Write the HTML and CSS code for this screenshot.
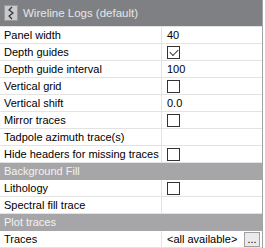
FILE: index.html
```html
<!DOCTYPE html>
<html lang="en">
<head>
  <meta charset="UTF-8" />
  <title>Wireline Logs</title>
  <link rel="stylesheet" href="styles.css">
</head>
<body>
  <div class="panel">
    <div class="title">
      <span class="icon">
        <svg width="14" height="16" viewBox="0 0 14 16">
          <rect x="0.5" y="0.5" width="13" height="15" fill="#c9c9cb" stroke="#9a9a9d"/>
          <path d="M8 2 L5 5 L9 8 L5 11 L8 14" fill="none" stroke="#333" stroke-width="1.2"/>
        </svg>
      </span>
      Wireline Logs (default)
    </div>
    <div class="grid">
      <div class="name">Panel width</div><div class="val">40</div>
      <div class="name">Depth guides</div><div class="val"><span class="check on"></span></div>
      <div class="name">Depth guide interval</div><div class="val">100</div>
      <div class="name">Vertical grid</div><div class="val"><span class="check"></span></div>
      <div class="name">Vertical shift</div><div class="val">0.0</div>
      <div class="name">Mirror traces</div><div class="val"><span class="check"></span></div>
      <div class="name">Tadpole azimuth trace(s)</div><div class="val"></div>
      <div class="name">Hide headers for missing traces</div><div class="val"><span class="check"></span></div>
      <div class="section">Background Fill</div>
      <div class="name">Lithology</div><div class="val"><span class="check"></span></div>
      <div class="name">Spectral fill trace</div><div class="val"></div>
      <div class="section">Plot traces</div>
      <div class="name">Traces</div><div class="val picker">&lt;all available&gt;<button class="dots">...</button></div>
    </div>
  </div>
</body>
</html>
```
FILE: styles.css
```css
body {
  margin: 0;
  background: #fff;
  font-family: "Liberation Sans", Arial, sans-serif;
  font-size: 11px;
}
.panel {
  width: 262px;
  height: 248px;
  border-right: 1px solid #a3a3a6;
}
.title {
  height: 26px;
  background: #7f8084;
  color: #e6e6e8;
  font-size: 11.5px;
  display: flex;
  align-items: center;
  gap: 5px;
  padding-left: 4px;
  border-bottom: 1px solid #e3e3e3;
}
.icon {
  display: flex;
}
.grid {
  display: grid;
  grid-template-columns: 162px 1fr;
}
.name, .val {
  height: 16px;
  line-height: 16px;
  border-bottom: 1px solid #e3e3e3;
  color: #000;
  white-space: nowrap;
  overflow: hidden;
}
.name {
  padding-left: 4px;
  border-right: 1px solid #e3e3e3;
}
.val {
  padding-left: 5px;
  display: flex;
  align-items: center;
}
.section {
  grid-column: 1 / 3;
  height: 17px;
  line-height: 17px;
  background: #a6a6a9;
  color: #f2f2f2;
  padding-left: 4px;
}
.check {
  width: 11px;
  height: 11px;
  border: 1px solid #333;
  background: #fff;
  position: relative;
}
.check.on::after {
  content: "";
  position: absolute;
  left: 2px;
  top: 0;
  width: 7px;
  height: 4px;
  border-left: 1px solid #333;
  border-bottom: 1px solid #333;
  transform: translate(0, 2px) rotate(-45deg);
}
.picker {
  justify-content: space-between;
  padding-right: 2px;
}
.dots {
  width: 16px;
  height: 15px;
  padding: 0;
  border: 1px solid #a0a0a0;
  background: #eaeaea;
  font-family: "Liberation Sans", Arial, sans-serif;
  font-size: 11px;
  line-height: 8px;
  color: #000;
}
```
